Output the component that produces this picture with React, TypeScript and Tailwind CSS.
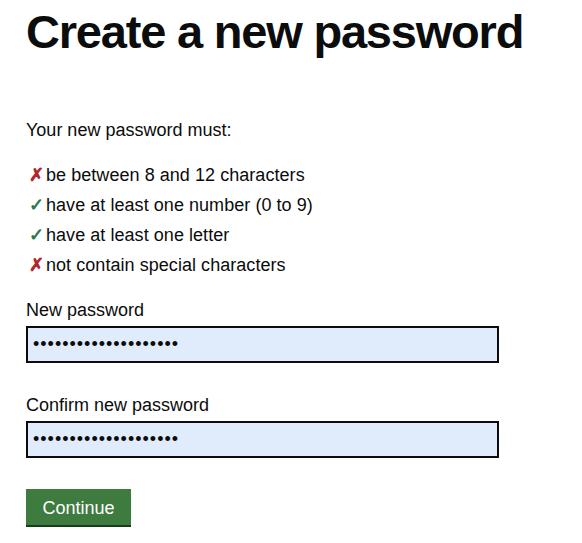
import { useState } from "react";

type Rule = { ok: boolean; text: string };

const RULES: Rule[] = [
  { ok: false, text: "be between 8 and 12 characters" },
  { ok: true, text: "have at least one number (0 to 9)" },
  { ok: true, text: "have at least one letter" },
  { ok: false, text: "not contain special characters" },
];

const FONT = "font-['Liberation_Sans',Arial,sans-serif]";

export default function App() {
  const [pw, setPw] = useState("aaaaaaaaaaaaaaaaaaaa");
  const [confirm, setConfirm] = useState("aaaaaaaaaaaaaaaaaaaa");

  return (
    <div className={`${FONT} min-h-screen bg-white px-[26px] text-[#0b0c0c]`}>
      <h1 className="mt-[7px] text-[47px] font-bold leading-[50px] tracking-[-1.2px]">
        Create a new password
      </h1>

      <p className="mt-[58px] text-[18px] leading-[30px]">Your new password must:</p>

      {/* rules */}
      <ul className="mt-[15px] text-[18px] leading-[30px]">
        {RULES.map((r) => (
          <li key={r.text} className="flex items-baseline">
            <span
              className={`w-[20px] pl-[3px] font-bold ${
                r.ok ? "text-[#2b7a4b]" : "text-[#b0262b]"
              }`}
            >
              {r.ok ? "✓" : "✗"}
            </span>
            <span className="tracking-[0.05px]">{r.text}</span>
          </li>
        ))}
      </ul>

      {/* fields */}
      <div className="mt-[18px]">
        <label className="block text-[18px] leading-[24px]">New password</label>
        <input
          type="password"
          value={pw}
          onChange={(e) => setPw(e.target.value)}
          className="mt-[4px] block h-[37px] w-[473px] border-2 border-[#0b0c0c] bg-[#e0ebfc] px-[5px] text-[18px] tracking-[1px] outline-none"
        />
      </div>

      <div className="mt-[30px]">
        <label className="block text-[18px] leading-[24px]">Confirm new password</label>
        <input
          type="password"
          value={confirm}
          onChange={(e) => setConfirm(e.target.value)}
          className="mt-[4px] block h-[37px] w-[473px] border-2 border-[#0b0c0c] bg-[#e0ebfc] px-[5px] text-[18px] tracking-[1px] outline-none"
        />
      </div>

      <button className="mt-[31px] h-[36px] w-[105px] bg-[#3d7b3f] pt-[2px] text-[18px] leading-none text-white shadow-[0_2px_0_#173a19]">
        Continue
      </button>
    </div>
  );
}
